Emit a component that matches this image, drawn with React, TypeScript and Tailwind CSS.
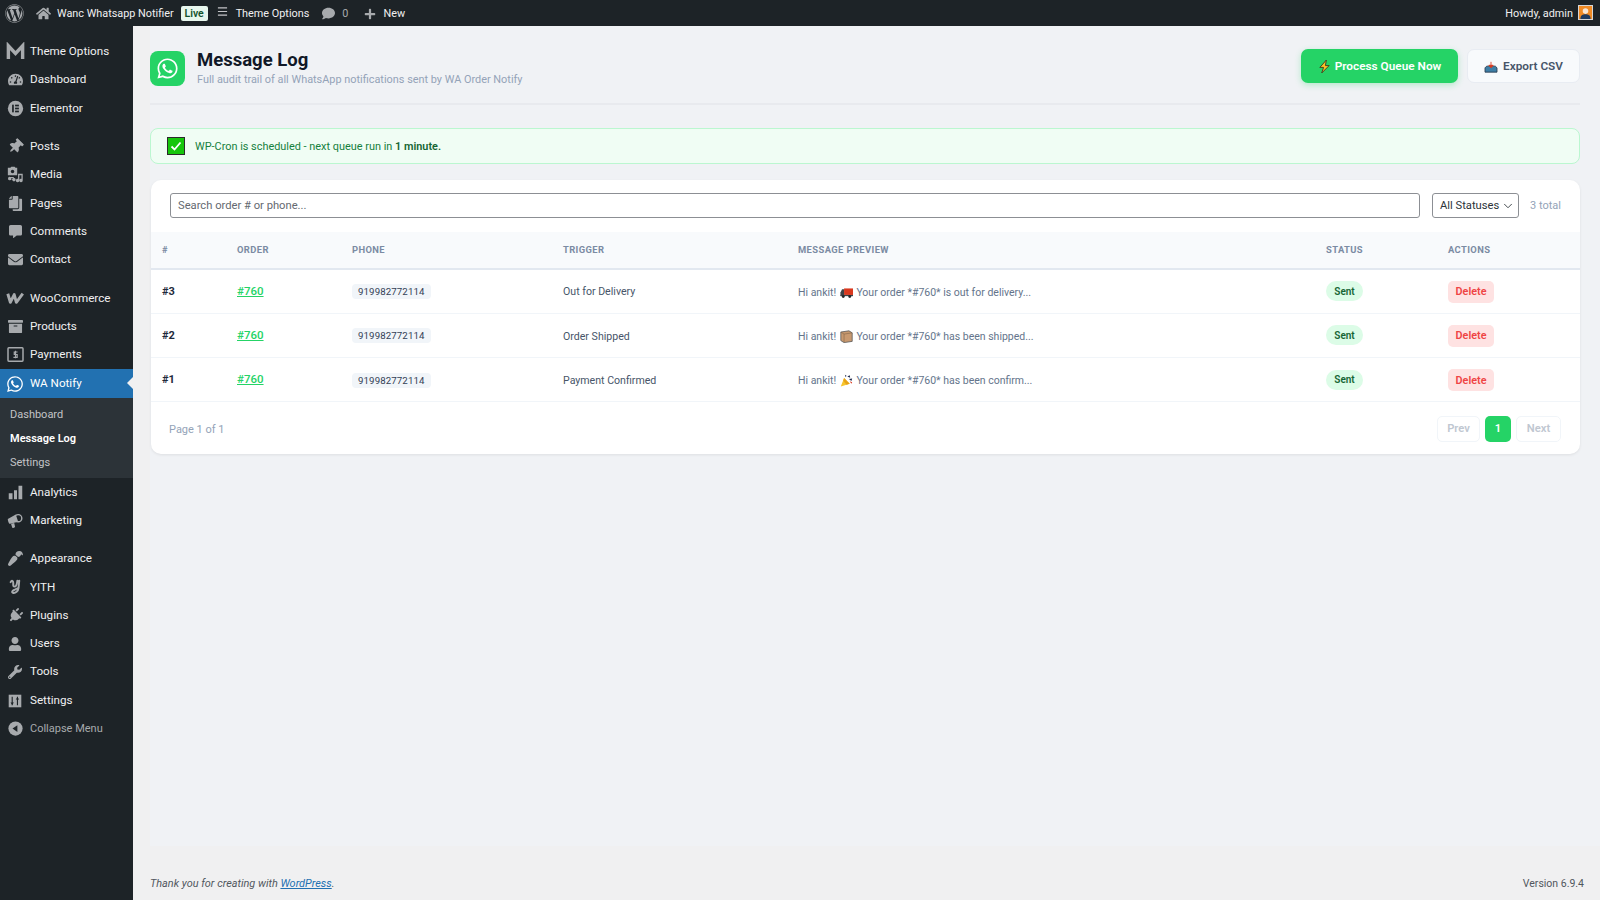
import React from 'react';
import {
  FaWordpress, FaHome, FaComment, FaPlus, FaTachometerAlt, FaThumbtack, FaCopy, FaCommentAlt,
  FaEnvelope, FaArchive, FaWhatsapp, FaPaintBrush, FaPlug, FaUser, FaWrench,
} from 'react-icons/fa';
import { ChevronDown } from 'lucide-react';

const font = "font-['Roboto','Noto_Sans',sans-serif]";

const ThemeIcon = () => (
  <svg viewBox="0 0 20 20" className="w-[19px] h-[19px]">
    <polyline points="2.5,18 2.5,4 10,12 17.5,4 17.5,18" fill="none" stroke="#a7aaad" strokeWidth="3.6" />
  </svg>
);

const ElementorIcon = () => (
  <svg viewBox="0 0 20 20" className="w-[17px] h-[17px]">
    <circle cx="10" cy="10" r="9" fill="#a7aaad" />
    <rect x="6" y="5.5" width="2" height="9" fill="#1d2327" />
    <rect x="9.5" y="5.5" width="4.5" height="2" fill="#1d2327" />
    <rect x="9.5" y="9" width="4.5" height="2" fill="#1d2327" />
    <rect x="9.5" y="12.5" width="4.5" height="2" fill="#1d2327" />
  </svg>
);

const MediaIcon = () => (
  <svg viewBox="0 0 20 20" className="w-[17px] h-[17px]" fill="#a7aaad">
    <path d="M1 2h3l1-1h4l1 1h2v9H1z" />
    <circle cx="6.5" cy="6.5" r="2" fill="#1d2327" />
    <path d="M13 9h5.500v8a2 2 0 1 1-1.500-1.900V11h-2.500v6a2 2 0 1 1-1.500-1.900z" />
    <path d="M4 13h4v1a2 2 0 1 1-1.500 3 2 2 0 0 1 .5-3H5a2 2 0 1 1-1-1z" />
  </svg>
);

const WooIcon = () => (
  <svg viewBox="0 0 22 14" className="w-[19px] h-[12px]">
    <polyline points="2,2 5,12 9.500,3 12,12 19.500,2" fill="none" stroke="#a7aaad" strokeWidth="3.400" strokeLinejoin="round" />
  </svg>
);

const MoneyIcon = () => (
  <svg viewBox="0 0 20 18" className="w-[17px] h-[15px]">
    <rect x="1" y="1" width="18" height="16" rx="1" fill="none" stroke="#a7aaad" strokeWidth="1.800" />
    <path d="M12.500 6H8.500v3h3.500v3.500H7.500M10 4.500v9" fill="none" stroke="#a7aaad" strokeWidth="1.400" />
  </svg>
);

const BarsIcon = () => (
  <svg viewBox="0 0 20 20" className="w-[15px] h-[15px]" fill="#a7aaad">
    <rect x="1" y="11" width="5" height="8" />
    <rect x="8" y="7" width="4" height="12" />
    <rect x="14" y="1" width="5" height="18" />
  </svg>
);

const MegaphoneIcon = () => (
  <svg viewBox="0 0 20 20" className="w-[16px] h-[16px]" fill="#a7aaad">
    <path d="M1 7.500l10-5.500 3 9-10 2.500c-2 .5-3-4.500-3-6z" />
    <circle cx="14" cy="6.500" r="4.500" fill="none" stroke="#a7aaad" strokeWidth="1.800" />
    <path d="M5 13.500l4-1 1 4.500c.3 1.500-3 2.500-3.500 1z" />
  </svg>
);

const YithIcon = () => (
  <svg viewBox="0 0 20 22" className="w-[15px] h-[18px]">
    <path d="M3.500 4.500C5 1.500 7 2.500 7 5.500s-.5 5 2 5 3-4 3.500-8M15 2.500l-1 10c-.5 4-4 7-7 6.500-2.500-.5-1.500-3 1-4l6-3" fill="none" stroke="#a7aaad" strokeWidth="2.600" strokeLinecap="round" />
  </svg>
);

const SettingsIcon = () => (
  <svg viewBox="0 0 20 20" className="w-[14px] h-[14px]">
    <rect x="1" y="1" width="18" height="18" fill="#a7aaad" />
    <path d="M6 4v12M13.500 4v12" stroke="#1d2327" strokeWidth="1.600" />
    <path d="M3.500 12h5L6 15.500zM11 8h5l-2.500-3.500z" fill="#1d2327" />
  </svg>
);

const CollapseIcon = () => (
  <svg viewBox="0 0 20 20" className="w-[15px] h-[15px]">
    <circle cx="10" cy="10" r="9.500" fill="#a7aaad" />
    <path d="M12.500 5.500v9L6 10z" fill="#1d2327" />
  </svg>
);

const gray = 'text-[#a7aaad]';

const menuGroups: { label: string; icon: React.ReactNode }[][] = [
  [
    { label: 'Theme Options', icon: <ThemeIcon /> },
    { label: 'Dashboard', icon: <FaTachometerAlt className={`${gray} text-[15px]`} /> },
    { label: 'Elementor', icon: <ElementorIcon /> },
  ],
  [
    { label: 'Posts', icon: <FaThumbtack className={`${gray} text-[15px] rotate-45`} /> },
    { label: 'Media', icon: <MediaIcon /> },
    { label: 'Pages', icon: <FaCopy className={`${gray} text-[15px] -scale-x-100`} /> },
    { label: 'Comments', icon: <FaCommentAlt className={`${gray} text-[13px]`} /> },
    { label: 'Contact', icon: <FaEnvelope className={`${gray} text-[15px]`} /> },
  ],
  [
    { label: 'WooCommerce', icon: <WooIcon /> },
    { label: 'Products', icon: <FaArchive className={`${gray} text-[15px]`} /> },
    { label: 'Payments', icon: <MoneyIcon /> },
  ],
];

const menuAfter: { label: string; icon: React.ReactNode }[][] = [
  [
    { label: 'Analytics', icon: <BarsIcon /> },
    { label: 'Marketing', icon: <MegaphoneIcon /> },
  ],
  [
    { label: 'Appearance', icon: <FaPaintBrush className={`${gray} text-[15px] rotate-180`} /> },
    { label: 'YITH', icon: <YithIcon /> },
    { label: 'Plugins', icon: <FaPlug className={`${gray} text-[15px] rotate-45`} /> },
    { label: 'Users', icon: <FaUser className={`${gray} text-[14px]`} /> },
    { label: 'Tools', icon: <FaWrench className={`${gray} text-[14px]`} /> },
    { label: 'Settings', icon: <SettingsIcon /> },
  ],
];

const MenuItem = ({ label, icon }: { label: string; icon: React.ReactNode }) => (
  <div className="flex items-center h-[28.33px] text-[#f0f0f1]">
    <span className="w-[30px] flex justify-center shrink-0">{icon}</span>
    <span>{label}</span>
  </div>
);

const TruckEmoji = () => (
  <svg viewBox="0 0 16 16" className="w-[13px] h-[13px] inline-block align-[-3px] mx-[1px]">
    <rect x="5" y="3" width="11" height="8" fill="#d9381e" />
    <path d="M1 7l1.500-3H5v8H0.500V8z" fill="#3e4347" />
    <rect x="0.500" y="11" width="15.500" height="1.500" fill="#3e4347" />
    <circle cx="4" cy="13" r="1.800" fill="#23272a" />
    <circle cx="12" cy="13" r="1.800" fill="#23272a" />
  </svg>
);

const BoxEmoji = () => (
  <svg viewBox="0 0 16 16" className="w-[13px] h-[13px] inline-block align-[-3px] mx-[1px]">
    <path d="M1 2.500L11 1l4 2.500V14l-10 1.500L1 13z" fill="#c8996f" stroke="#5b5b5b" strokeWidth="1" />
    <path d="M1 2.500l4 2.500 10-1.500M5 5v10" fill="none" stroke="#8a6a4c" strokeWidth="0.800" />
  </svg>
);

const PartyEmoji = () => (
  <svg viewBox="0 0 16 16" className="w-[13px] h-[13px] inline-block align-[-3px] mx-[1px]">
    <path d="M5 5l7 7-11 3.500z" fill="#f7c52d" />
    <path d="M5 5l7 7-4 1.300L4 8z" fill="#e8a317" />
    <path d="M6 1l2 1-1 2zM9 3l3-1.500.5 3zM11 6l4-.5-1 3z" fill="#1f2a4d" />
    <path d="M12 9l3 1-1 2z" fill="#d9381e" />
  </svg>
);

const rows = [
  { id: '#3', trigger: 'Out for Delivery', emoji: <TruckEmoji />, text: 'Your order *#760* is out for delivery...' },
  { id: '#2', trigger: 'Order Shipped', emoji: <BoxEmoji />, text: 'Your order *#760* has been shipped...' },
  { id: '#1', trigger: 'Payment Confirmed', emoji: <PartyEmoji />, text: 'Your order *#760* has been confirm...' },
];

const columns = [
  { label: '#', w: 'w-[75px]' },
  { label: 'Order', w: 'w-[115px]' },
  { label: 'Phone', w: 'w-[211px]' },
  { label: 'Trigger', w: 'w-[235px]' },
  { label: 'Message Preview', w: 'w-[528px]' },
  { label: 'Status', w: 'w-[122px]' },
  { label: 'Actions', w: 'w-[143px]' },
];

export default function App() {
  return (
    <div className={`${font} w-[1600px] h-[900px] overflow-hidden bg-[#f0f0f1] flex flex-col text-[10.900px]`}>
      {/* admin bar */}
      <div className="h-[26px] shrink-0 bg-[#1d2327] flex items-center justify-between text-[#f0f0f1] text-[10.850px] pt-[2px]">
        <div className="flex items-center">
          <FaWordpress className="text-[#a7aaad] text-[19px] ml-[5px] mr-[12px] -mt-[2px]" />
          <FaHome className="text-[#a7aaad] text-[15px] mr-[6px] -mt-[1px]" />
          <span>Wanc Whatsapp Notifier</span>
          <span className="ml-[7px] bg-[#e8f7ee] text-[#14532d] font-semibold text-[10.500px] rounded-[2px] w-[27px] text-center h-[15px] leading-[15px] -mt-[1px]">Live</span>
          <svg viewBox="0 0 12 12" className="w-[11px] h-[11px] ml-[9px] mr-[8px] -mt-[6px]">
            <path d="M1 2h10M1 6h10M1 10h10" stroke="#c3c4c7" strokeWidth="1.200" />
          </svg>
          <span>Theme Options</span>
          <FaComment className="text-[#a7aaad] text-[13px] ml-[13px] mr-[7px] -mt-[1px]" />
          <span className="text-[#a7aaad]">0</span>
          <FaPlus className="text-[#a7aaad] text-[12px] ml-[16px] mr-[7px] -mt-[1px]" />
          <span>New</span>
        </div>
        <div className="flex items-center mr-[7px]">
          <span>Howdy, admin</span>
          <span className="ml-[5px] w-[15px] h-[15px] -mt-[2px] bg-[#f08a24] border border-[#d5d5d5] flex items-end justify-center overflow-hidden">
            <svg viewBox="0 0 14 14" className="w-[13px] h-[13px]">
              <circle cx="7" cy="5.500" r="3" fill="#f6e7d8" />
              <path d="M1.500 14c0-4 2.500-5 5.500-5s5.500 1 5.500 5z" fill="#1e3a5f" />
            </svg>
          </span>
        </div>
      </div>

      <div className="flex-1 flex min-h-0">
        {/* sidebar */}
        <div className="w-[133px] shrink-0 bg-[#1d2327] pt-[11.500px] text-[11.670px]">
          {menuGroups.map((group, i) => (
            <div key={i} className={i < menuGroups.length - 1 ? 'mb-[10px]' : ''}>
              {group.map((item) => (
                <MenuItem key={item.label} {...item} />
              ))}
            </div>
          ))}
          <div className="relative flex items-center h-[29px] bg-[#2271b1] text-white">
            <span className="w-[30px] flex justify-center">
              <FaWhatsapp className="text-white text-[18px]" />
            </span>
            <span>WA Notify</span>
            <span className="absolute right-0 top-[8px] border-y-[6.500px] border-y-transparent border-r-[6.500px] border-r-[#f0f0f1]" />
          </div>
          <div className="bg-[#2c3338] pt-[5px] pb-[3px] pl-[10px] text-[11px]">
            <div className="h-[24px] flex items-center text-[#c3c4c7]">Dashboard</div>
            <div className="h-[24px] flex items-center text-white font-semibold">Message Log</div>
            <div className="h-[24px] flex items-center text-[#c3c4c7]">Settings</div>
          </div>
          {menuAfter.map((group, i) => (
            <div key={i} className="mb-[10px]">
              {group.map((item) => (
                <MenuItem key={item.label} {...item} />
              ))}
            </div>
          ))}
          <div className="flex items-center h-[28.33px] -mt-[10px] text-[#a7aaad] text-[11px]">
            <span className="w-[30px] flex justify-center">
              <CollapseIcon />
            </span>
            <span>Collapse Menu</span>
          </div>
        </div>

        {/* content */}
        <div className="flex-1 flex flex-col min-w-0 pl-[17px]">
          <div className="h-[820px] shrink-0 bg-[#f0f2f5] pr-[20px] pt-[23px]">
            <div className="flex items-start justify-between h-[56px] border-b-2 border-[#e8eaee]">
              <div className="flex items-center">
                <div className="w-[35px] h-[35px] rounded-[8px] bg-[#25d366] flex items-center justify-center">
                  <FaWhatsapp className="text-white text-[23px]" />
                </div>
                <div className="ml-[12px]">
                  <div className="text-[18.500px] leading-[22px] font-bold text-[#111827]">Message Log</div>
                  <div className="text-[#94a3b8] leading-[16px] mt-[1px]">Full audit trail of all WhatsApp notifications sent by WA Order Notify</div>
                </div>
              </div>
              <div className="flex items-center gap-[9px]">
                <button className="w-[157px] h-[34px] pt-[1px] rounded-[7px] bg-[#25d366] text-white font-semibold text-[11.800px] flex items-center justify-center gap-[4px] shadow-[0_2px_6px_rgba(37,211,102,0.3)]">
                  <svg viewBox="0 0 14 16" className="w-[13px] h-[15px]">
                    <path d="M9 1L2 9h4l-2 6 8-8H8z" fill="#fbbf24" stroke="#3f3f1f" strokeWidth="1" />
                  </svg>
                  Process Queue Now
                </button>
                <button className="w-[113px] h-[34px] pt-[1px] rounded-[7px] bg-[#f8fafc] border border-[#e8ecf2] text-[#475569] font-semibold text-[11.800px] flex items-center justify-center gap-[5px]">
                  <svg viewBox="0 0 16 14" className="w-[14px] h-[12px]">
                    <path d="M1 8l2-2h10l2 2v5H1z" fill="#3d7ea6" stroke="#2a3b4d" strokeWidth="1" />
                    <path d="M8 1v4M5.500 5h5L8 8z" stroke="#d9381e" fill="#d9381e" strokeWidth="1" />
                  </svg>
                  Export CSV
                </button>
              </div>
            </div>

            {/* notice */}
            <div className="mt-[23px] h-[36px] rounded-[8px] bg-[#f0fdf4] border border-[#bbf7d0] flex items-center pl-[16px] text-[#15803d]">
              <svg viewBox="0 0 18 18" className="w-[18px] h-[18px]">
                <rect x="0.500" y="0.500" width="17" height="17" fill="#16c60c" stroke="#2b2b2b" />
                <path d="M4.500 9.500l3 3 6-7" fill="none" stroke="#fff" strokeWidth="1.800" />
              </svg>
              <span className="ml-[10px] pt-[2px]">WP-Cron is scheduled - next queue run in <strong className="font-semibold text-[#166534]">1 minute.</strong></span>
            </div>

            {/* card */}
            <div className="mt-[16px] ml-px h-[274px] bg-white rounded-[10px] shadow-[0_1px_3px_rgba(0,0,0,0.08)] overflow-hidden">
              <div className="h-[52px] flex items-start pt-[13px] pl-[19px] pr-[19px]">
                <div className="flex-1 h-[25px] pt-[2px] border border-[#8c8f94] rounded-[3px] px-[7px] flex items-center text-[#646970] text-[11.200px]">Search order # or phone...</div>
                <div className="ml-[12px] w-[87px] h-[25px] pt-[2px] border border-[#8c8f94] rounded-[3px] pl-[7px] flex items-center justify-between pr-[3px] text-[#2c3338] text-[11.200px] whitespace-nowrap">
                  All Statuses
                  <ChevronDown size={14} strokeWidth={1.500} className="-mt-[2px]" />
                </div>
                <span className="ml-[11px] w-[31px] whitespace-nowrap h-[25px] pt-[2px] flex items-center text-[#94a3b8] text-[11px]">3 total</span>
              </div>
              <table className="table-fixed w-full border-collapse">
                <thead>
                  <tr className="h-[37px] bg-[#f8fafc] border-b-2 border-[#e2e8f0]">
                    {columns.map((c) => (
                      <th key={c.label} className={`${c.w} pl-[11px] pt-[1px] text-left text-[9.400px] font-bold uppercase tracking-[0.4px] text-[#7b8ba3]`}>{c.label}</th>
                    ))}
                  </tr>
                </thead>
                <tbody>
                  {rows.map((r) => (
                    <tr key={r.id} className="h-[44.300px] border-b border-[#f1f5f9]">
                      <td className="pl-[11px] pt-[1px] font-bold text-[#1e293b] text-[11px]">{r.id}</td>
                      <td className="pl-[11px]">
                        <span className="text-[#25d366] underline font-medium text-[11.500px]">#760</span>
                      </td>
                      <td className="pl-[11px] pt-[2px]">
                        <span className="inline-block bg-[#f1f5f9] rounded-[4px] px-[6px] h-[15px] leading-[15px] text-[9.700px] text-[#334155] tracking-[0.100px]">919982772114</span>
                      </td>
                      <td className="pl-[11px] pt-[2px] text-[#475569] text-[10.600px]">{r.trigger}</td>
                      <td className="pl-[11px] pt-[2px] text-[#64748b] text-[10.500px]">
                        Hi ankit! {r.emoji} {r.text}
                      </td>
                      <td className="pl-[11px]">
                        <span className="inline-flex items-center justify-center w-[37px] h-[20px] rounded-full bg-[#dcfce7] text-[#166534] font-semibold text-[10px]">Sent</span>
                      </td>
                      <td className="pl-[11px] pt-[1px]">
                        <button className="w-[46px] h-[22px] pt-[1px] rounded-[5px] bg-[#fee2e2] text-[#ef4444] font-semibold text-[10.800px]">Delete</button>
                      </td>
                    </tr>
                  ))}
                </tbody>
              </table>
              <div className="flex items-center justify-between pl-[18px] pr-[19px] pt-[14px]">
                <span className="text-[#94a3b8] text-[11px] pt-[1px]">Page 1 of 1</span>
                <div className="flex gap-[5px] text-[11.200px] font-semibold">
                  <span className="w-[43px] h-[26px] pt-[1px] rounded-[5px] border border-[#f1f5f9] text-[#c0c7d1] flex items-center justify-center">Prev</span>
                  <span className="w-[26px] h-[26px] pt-[1px] rounded-[5px] bg-[#25d366] text-white flex items-center justify-center">1</span>
                  <span className="w-[45px] h-[26px] pt-[1px] rounded-[5px] border border-[#f1f5f9] text-[#c0c7d1] flex items-center justify-center">Next</span>
                </div>
              </div>
            </div>
          </div>

          {/* footer */}
          <div className="flex-1 flex items-start justify-between pr-[16px] pt-[30px] text-[#50575e] text-[10.500px]">
            <span className="italic text-[10.900px]">Thank you for creating with <span className="text-[#2271b1] underline">WordPress</span>.</span>
            <span>Version 6.9.4</span>
          </div>
        </div>
      </div>
    </div>
  );
}
